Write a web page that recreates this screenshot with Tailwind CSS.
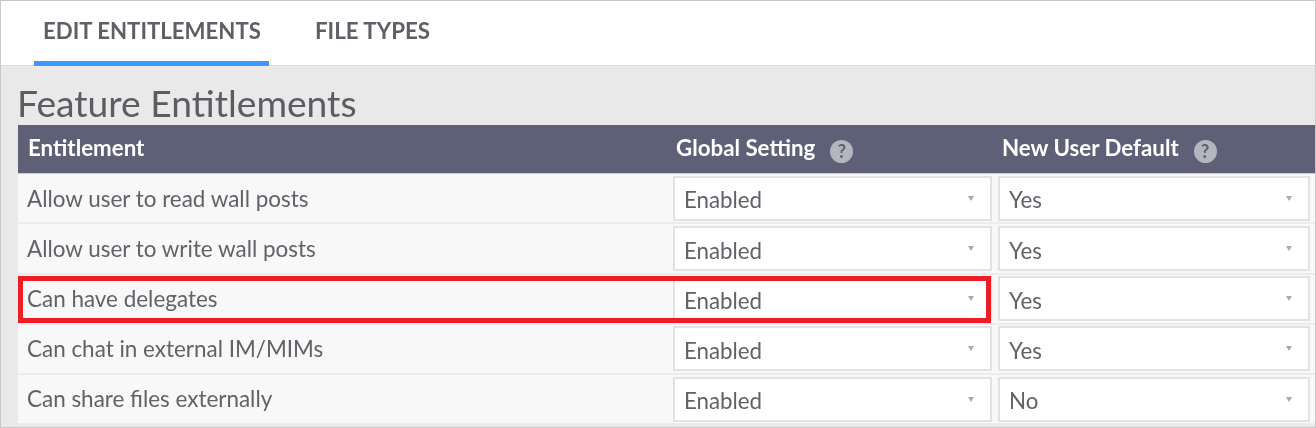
<!DOCTYPE html>
<html lang="en">
<head>
    <meta charset="UTF-8">
    <title>Feature Entitlements</title>
    <script src="https://cdn.jsdelivr.net/npm/@tailwindcss/browser@4"></script>
</head>
<body class="bg-[#e9e9e9] text-[#606268] font-['Lato',sans-serif]">
<div class="relative h-[428px] w-[1316px] overflow-hidden border border-[#c8c8c8] blur-[0.4px]">

    <!-- tabs -->
    <div class="flex h-[65px] bg-white border-b border-[#dcdcdc] pl-[33px]">
        <a class="h-[65px] w-[235px] border-b-[5px] border-[#3b99fc] pl-[9px] pt-[16px] text-[22.2px] leading-[28px] font-bold text-[#5e6066]">EDIT ENTITLEMENTS</a>
        <a class="ml-[46px] pt-[16px] text-[22.3px] leading-[28px] font-bold text-[#5e6066]">FILE TYPES</a>
    </div>

    <h1 class="pl-[16px] pt-[15px] h-[59px] text-[37.2px] leading-[44px] text-[#5b5d63]">Feature Entitlements</h1>

    <div class="ml-[17px]">
        <!-- header -->
        <div class="flex h-[49px] items-center border-b border-[#c9cad0] bg-[#5d6076] text-white text-[22.3px] font-bold">
            <div class="w-[655px] pl-[10px] pb-[2px]">Entitlement</div>
            <div class="flex w-[329px] items-center pl-[3px]"><span class="pb-[2px]">Global Setting</span> <span class="ml-[15px] mt-[4px] flex h-[23px] w-[23px] items-center justify-center rounded-full bg-[#b4b5bf] text-[18px] text-[#5d6076]">?</span></div>
            <div class="flex items-center"><span class="pb-[2px]">New User Default</span> <span class="ml-[15px] mt-[4px] flex h-[23px] w-[23px] items-center justify-center rounded-full bg-[#b4b5bf] text-[18px] text-[#5d6076]">?</span></div>
        </div>

        <!-- rows -->
        <div class="flex h-[50.25px] items-center border-b-2 border-[#ececec] bg-[#f8f8f8] text-[22.3px]">
            <div class="w-[655px] pl-[9px] pt-[1px] text-[22.45px]">Allow user to read wall posts</div>
            <div class="flex h-[45px] w-[319px] items-center justify-between border-2 border-[#e2e2e2] bg-white pl-[9px] pr-[16px]"><span class="pt-[4px]">Enabled</span> <span class="h-0 w-0 border-x-[3.5px] border-t-[5px] border-x-transparent border-t-[#aaaaaa]"></span></div>
            <div class="ml-[6px] flex h-[45px] w-[312px] items-center justify-between border-2 border-[#e2e2e2] bg-white pl-[9px] pr-[16px]"><span class="pt-[4px]">Yes</span> <span class="h-0 w-0 border-x-[3.5px] border-t-[5px] border-x-transparent border-t-[#aaaaaa]"></span></div>
        </div>
        <div class="flex h-[50.25px] items-center border-b-2 border-[#ececec] bg-[#f8f8f8] text-[22.3px]">
            <div class="w-[655px] pl-[9px] text-[22.45px]">Allow user to write wall posts</div>
            <div class="flex h-[45px] w-[319px] items-center justify-between border-2 border-[#e2e2e2] bg-white pl-[9px] pr-[16px]"><span class="pt-[4px]">Enabled</span> <span class="h-0 w-0 border-x-[3.5px] border-t-[5px] border-x-transparent border-t-[#aaaaaa]"></span></div>
            <div class="ml-[6px] flex h-[45px] w-[312px] items-center justify-between border-2 border-[#e2e2e2] bg-white pl-[9px] pr-[16px]"><span class="pt-[4px]">Yes</span> <span class="h-0 w-0 border-x-[3.5px] border-t-[5px] border-x-transparent border-t-[#aaaaaa]"></span></div>
        </div>
        <div class="flex h-[50.25px] items-center border-b-2 border-[#ececec] bg-[#f8f8f8] text-[22.3px]">
            <div class="w-[655px] pl-[9px] text-[22.45px]">Can have delegates</div>
            <div class="flex h-[45px] w-[319px] items-center justify-between border-2 border-[#e2e2e2] bg-white pl-[9px] pr-[16px]"><span class="pt-[4px]">Enabled</span> <span class="h-0 w-0 border-x-[3.5px] border-t-[5px] border-x-transparent border-t-[#aaaaaa]"></span></div>
            <div class="ml-[6px] flex h-[45px] w-[312px] items-center justify-between border-2 border-[#e2e2e2] bg-white pl-[9px] pr-[16px]"><span class="pt-[4px]">Yes</span> <span class="h-0 w-0 border-x-[3.5px] border-t-[5px] border-x-transparent border-t-[#aaaaaa]"></span></div>
        </div>
        <div class="flex h-[50.25px] items-center border-b-2 border-[#ececec] bg-[#f8f8f8] text-[22.3px]">
            <div class="w-[655px] pl-[9px] text-[22.45px]">Can chat in external IM/MIMs</div>
            <div class="flex h-[45px] w-[319px] items-center justify-between border-2 border-[#e2e2e2] bg-white pl-[9px] pr-[16px]"><span class="pt-[4px]">Enabled</span> <span class="h-0 w-0 border-x-[3.5px] border-t-[5px] border-x-transparent border-t-[#aaaaaa]"></span></div>
            <div class="ml-[6px] flex h-[45px] w-[312px] items-center justify-between border-2 border-[#e2e2e2] bg-white pl-[9px] pr-[16px]"><span class="pt-[4px]">Yes</span> <span class="h-0 w-0 border-x-[3.5px] border-t-[5px] border-x-transparent border-t-[#aaaaaa]"></span></div>
        </div>
        <div class="flex h-[50.25px] items-center border-b-2 border-[#ececec] bg-[#f8f8f8] text-[22.3px]">
            <div class="w-[655px] pl-[9px] text-[22.45px]">Can share files externally</div>
            <div class="flex h-[45px] w-[319px] items-center justify-between border-2 border-[#e2e2e2] bg-white pl-[9px] pr-[16px]"><span class="pt-[4px]">Enabled</span> <span class="h-0 w-0 border-x-[3.5px] border-t-[5px] border-x-transparent border-t-[#aaaaaa]"></span></div>
            <div class="ml-[6px] flex h-[45px] w-[312px] items-center justify-between border-2 border-[#e2e2e2] bg-white pl-[9px] pr-[16px]"><span class="pt-[4px]">No</span> <span class="h-0 w-0 border-x-[3.5px] border-t-[5px] border-x-transparent border-t-[#aaaaaa]"></span></div>
        </div>
    </div>

    <!-- red highlight -->
    <div class="absolute left-[17px] top-[275px] h-[47px] w-[973px] border-[5px] border-[#ee1c25]"></div>
</div>
</body>
</html>
